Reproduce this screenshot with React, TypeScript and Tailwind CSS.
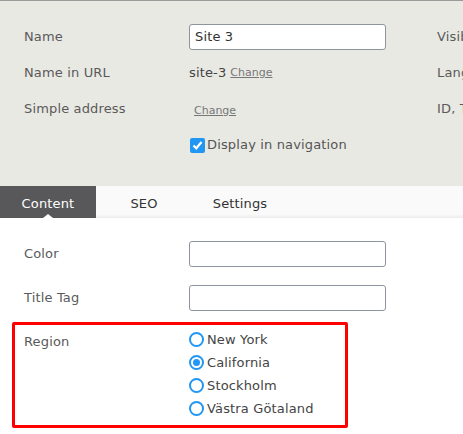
import React from "react";

const font = { fontFamily: '"DejaVu Sans", Verdana, sans-serif' };

function Radio({ label, checked }: { label: string; checked?: boolean }) {
  return (
    <div className="flex h-[23px] items-center">
      <span className="flex h-[15px] w-[15px] shrink-0 items-center justify-center rounded-full border-2 border-[#2196f3] bg-white">
        {checked && <span className="h-[7px] w-[7px] rounded-full bg-[#2196f3]" />}
      </span>
      <span className="ml-[3px] whitespace-nowrap text-[13px] tracking-[0.15px] text-[#444]">{label}</span>
    </div>
  );
}

export default function App() {
  return (
    <div className="relative h-[434px] w-[463px] overflow-hidden bg-white" style={font}>
      {/* header */}
      <div className="h-[186px] border-t border-[#9a9a9a] bg-[#e9e9e4] pt-[18px]">
        <div className="flex h-[36px] items-center">
          <div className="w-[189px] shrink-0 pl-[24px] text-[13px] tracking-[0.15px] text-[#5a5a5a]">Name</div>
          <div className="flex h-[26px] w-[197px] shrink-0 items-center rounded-[3px] border border-[#8d949e] bg-white pl-[5px] text-[13px] tracking-[0.15px] text-[#333]">
            Site 3
          </div>
          <div className="ml-[51px] shrink-0 whitespace-nowrap text-[13px] tracking-[0.15px] text-[#5a5a5a]">Visibility</div>
        </div>
        <div className="flex h-[36px] items-center">
          <div className="w-[189px] shrink-0 pl-[24px] text-[13px] tracking-[0.15px] text-[#5a5a5a]">Name in URL</div>
          <div className="flex w-[248px] shrink-0 items-center">
            <span className="text-[13px] tracking-[0.15px] text-[#444]">site-3</span>
            <span className="ml-[4px] text-[11px] text-[#777] underline">Change</span>
          </div>
          <div className="shrink-0 whitespace-nowrap text-[13px] tracking-[0.15px] text-[#5a5a5a]">Language</div>
        </div>
        <div className="flex h-[36px] items-center">
          <div className="w-[189px] shrink-0 pl-[24px] text-[13px] tracking-[0.15px] text-[#5a5a5a]">Simple address</div>
          <div className="w-[248px] shrink-0 pl-[5px]">
            <span className="text-[11px] text-[#777] underline">Change</span>
          </div>
          <div className="shrink-0 whitespace-nowrap text-[13px] tracking-[0.15px] text-[#5a5a5a]">ID, Type</div>
        </div>
        <div className="flex h-[36px] items-center pl-[190px]">
          <span className="flex h-[15px] w-[15px] shrink-0 items-center justify-center rounded-[2px] bg-[#2196f3]">
            <svg width="11" height="11" viewBox="0 0 11 11">
              <path d="M1.5 5.5 L4.3 8.3 L9.5 2" fill="none" stroke="white" strokeWidth="2.2" />
            </svg>
          </span>
          <span className="ml-[2px] whitespace-nowrap text-[13px] tracking-[0.15px] text-[#555]">Display in navigation</span>
        </div>
      </div>

      {/* tabs */}
      <div className="relative flex h-[32px] bg-[#fafafa]">
        <div className="relative flex w-[96px] shrink-0 items-center justify-center bg-[#58585a] pt-[4px] text-[13px] tracking-[0.15px] text-white">
          Content
          <span className="absolute bottom-0 left-[43px] h-0 w-0 border-x-[5px] border-b-[4px] border-x-transparent border-b-white" />
        </div>
        <div className="flex w-[96px] shrink-0 items-center justify-center pt-[4px] text-[13px] tracking-[0.15px] text-[#333]">SEO</div>
        <div className="flex w-[96px] shrink-0 items-center justify-center pt-[4px] text-[13px] tracking-[0.15px] text-[#333]">Settings</div>
        <div className="pointer-events-none absolute bottom-0 left-[96px] right-0 h-[4px] bg-gradient-to-b from-[#fafafa] to-[#ececec]" />
      </div>

      {/* content */}
      <div className="pt-[23px]">
        <div className="flex h-[26px] items-center">
          <div className="w-[189px] shrink-0 pl-[24px] text-[13px] tracking-[0.15px] text-[#5a5a5a]">Color</div>
          <div className="h-[26px] w-[197px] shrink-0 rounded-[3px] border border-[#8d949e] bg-white" />
        </div>
        <div className="mt-[18px] flex h-[26px] items-center">
          <div className="w-[189px] shrink-0 pl-[24px] text-[13px] tracking-[0.15px] text-[#5a5a5a]">Title Tag</div>
          <div className="h-[26px] w-[197px] shrink-0 rounded-[3px] border border-[#8d949e] bg-white" />
        </div>
        <div className="ml-[12px] mt-[11px] flex h-[106px] w-[336px] rounded-[2px] border-[3px] border-[#ff0000] pt-[3px]">
          <div className="w-[174px] shrink-0 pl-[9px] pt-[4px] text-[13px] tracking-[0.15px] text-[#5a5a5a]">Region</div>
          <div className="flex flex-col">
            <Radio label="New York" />
            <Radio label="California" checked />
            <Radio label="Stockholm" />
            <Radio label="Västra Götaland" />
          </div>
        </div>
      </div>
    </div>
  );
}
